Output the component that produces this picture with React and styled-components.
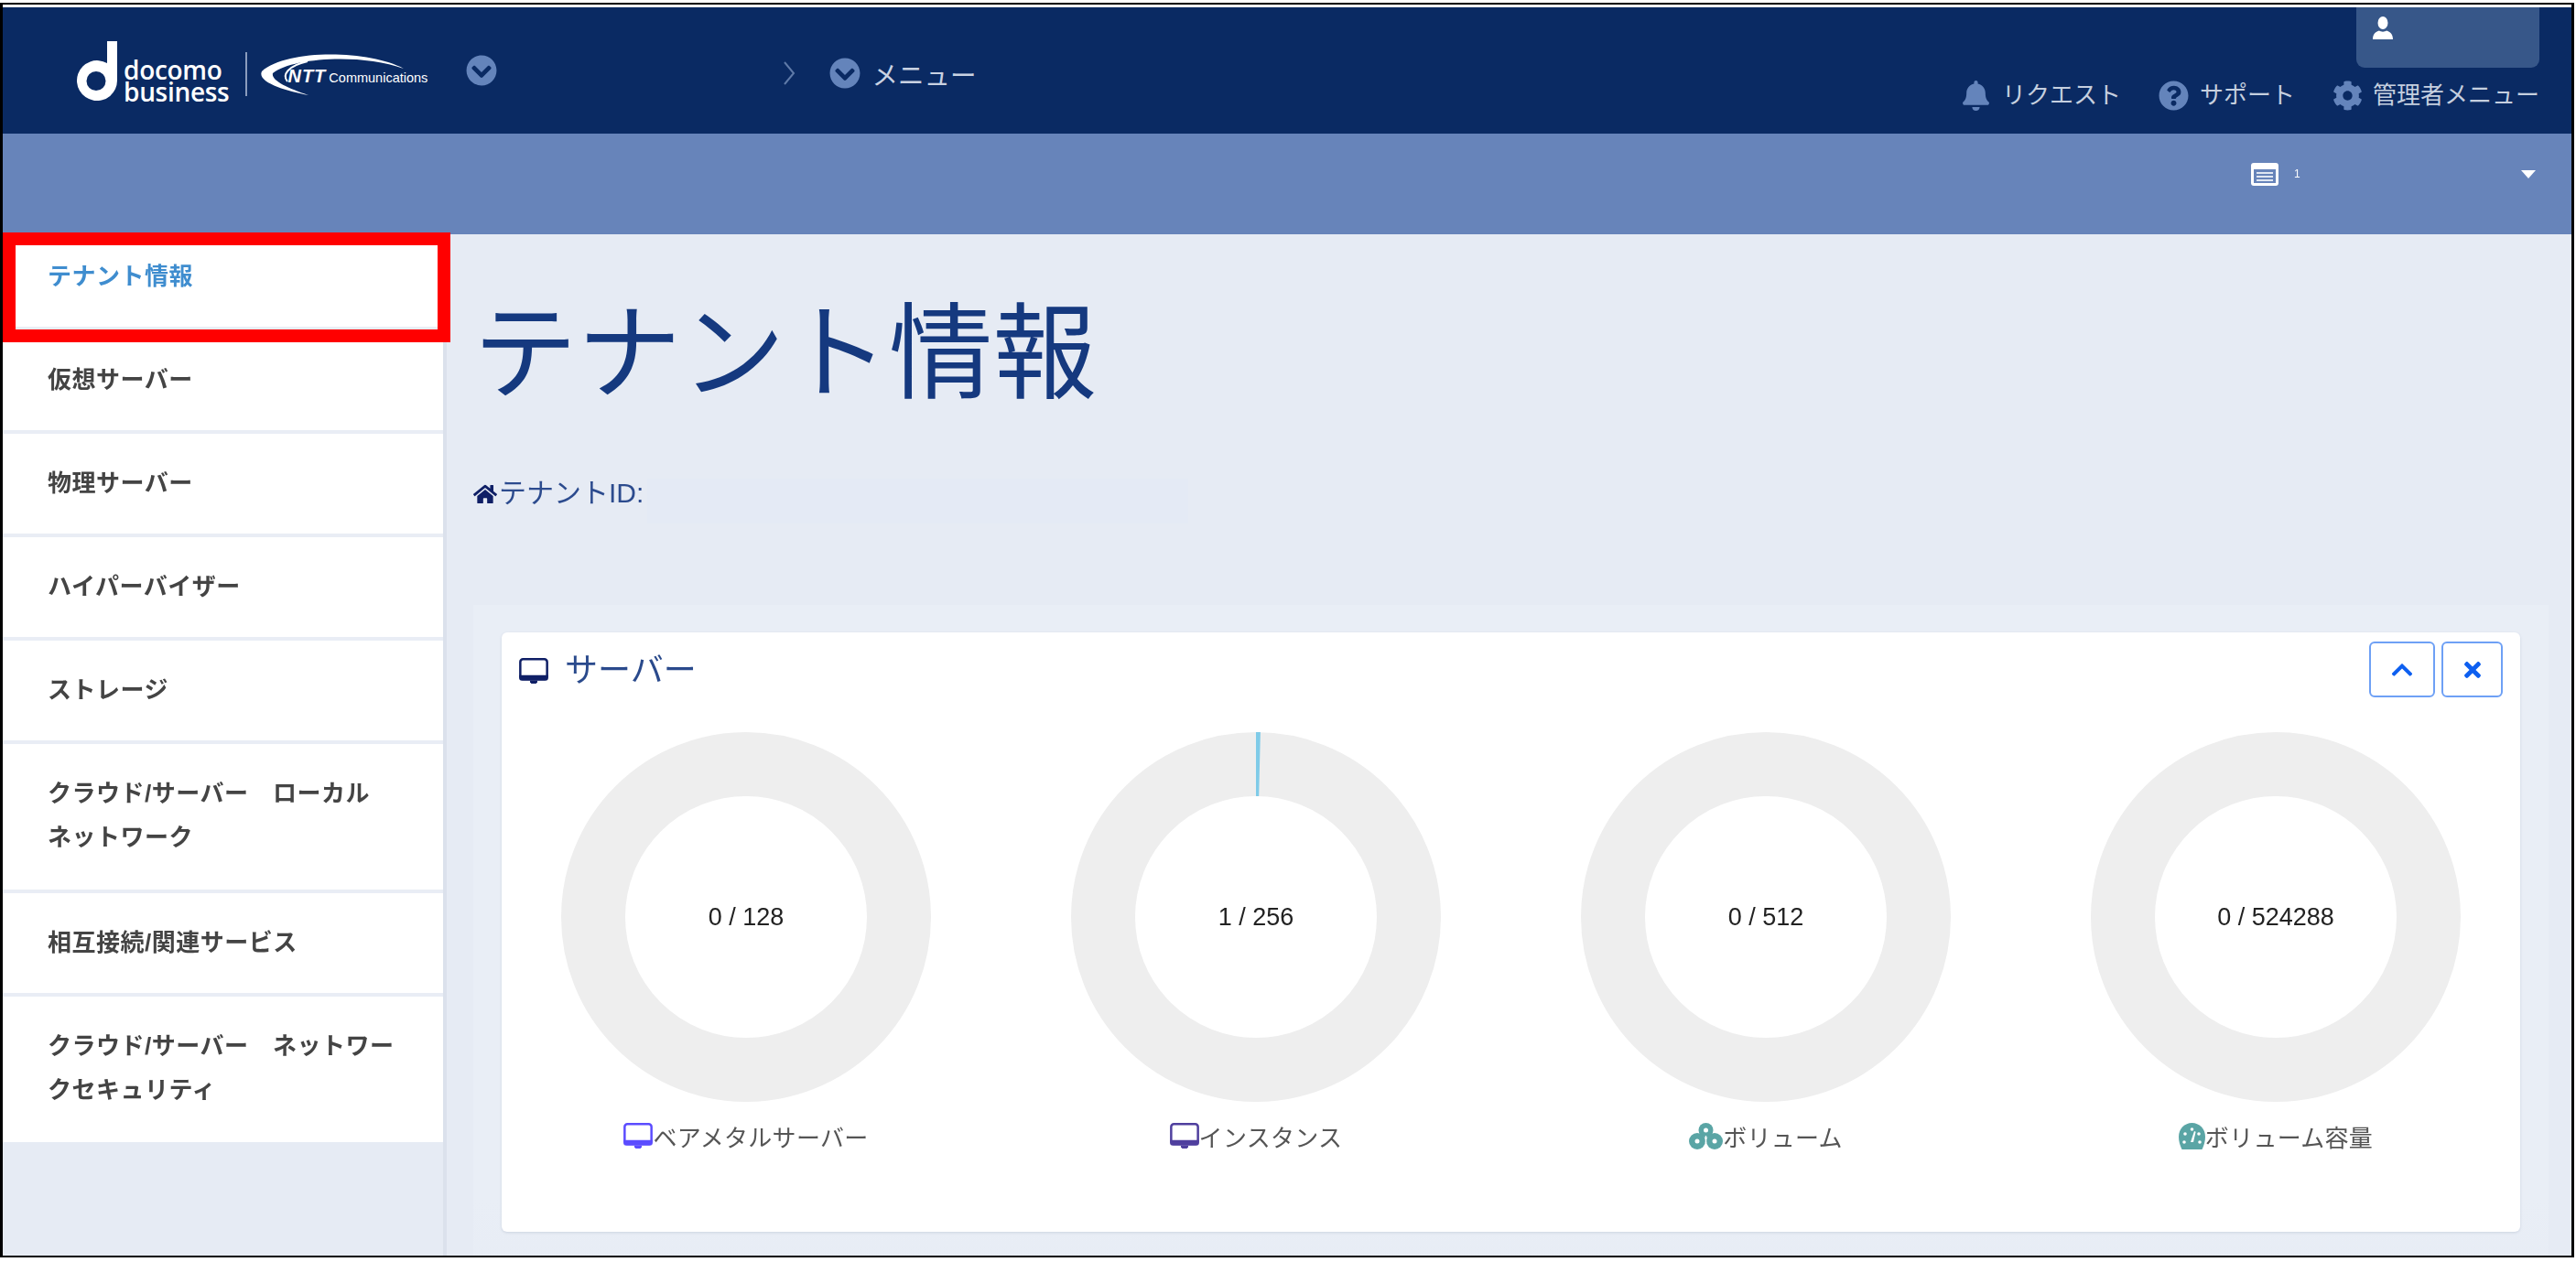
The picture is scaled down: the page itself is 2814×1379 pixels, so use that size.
import styled, { createGlobalStyle } from 'styled-components';
import {
  FaBell,
  FaChevronCircleDown,
  FaChevronUp,
  FaCog,
  FaHome,
  FaQuestionCircle,
  FaTimes,
} from 'react-icons/fa';

const GlobalStyle = createGlobalStyle`
  html, body {
    margin: 0;
    padding: 0;
    background: #fff;
  }
  * {
    box-sizing: border-box;
  }
`;

const Page = styled.div`
  width: 2814px;
  height: 1379px;
  overflow: hidden;
  background: #fff;
  padding: 3px 2px 5px 0;
  font-family: 'Liberation Sans', 'Noto Sans CJK JP', sans-serif;
`;

const Frame = styled.div`
  height: 100%;
  border: solid #000;
  border-width: 2px 3px 2px 3px;
  padding-top: 3px;
  overflow: hidden;
`;

/* the reference is an upscaled capture, everything in it is a little soft */
const Capture = styled.div`
  height: 100%;
  display: flex;
  flex-direction: column;
  filter: blur(0.6px);
`;

const Header = styled.header`
  flex: none;
  height: 138px;
  background: #0a2a63;
  display: flex;
  justify-content: space-between;
  padding: 0 35px 0 79px;
`;

const HeaderLeft = styled.div`
  display: flex;
  align-items: center;
`;

const Logo = styled.div`
  display: flex;
  align-items: center;
  color: #fff;
`;

const LogoWords = styled.div`
  display: flex;
  flex-direction: column;
  margin-left: 7px;
  font-family: 'Open Sans', sans-serif;
  font-size: 28px;
  font-weight: 600;
  line-height: 24px;
  letter-spacing: -0.3px;
  margin-top: 22px;
`;

const LogoRule = styled.span`
  width: 2px;
  height: 48px;
  margin: 8px 14px 0 18px;
  background: #8a9cbd;
`;

const NttMark = styled.div`
  display: grid;
  width: 188px;
  height: 46px;
  margin-top: 8px;
  svg,
  span {
    grid-area: 1 / 1;
  }
`;

const NttText = styled.span`
  padding: 15px 0 0 30px;
  font-family: 'Liberation Sans', sans-serif;
  font-size: 14.5px;
  line-height: 20px;
  white-space: nowrap;
  b {
    font-size: 20px;
    font-style: italic;
    letter-spacing: 1px;
    margin-right: 3px;
  }
`;

const RoundChevron = styled(FaChevronCircleDown)`
  flex: none;
  font-size: 34px;
  color: #6484bb;
`;

const ProductToggle = styled.span`
  display: flex;
  margin-left: 37px;
`;

const Crumbs = styled.nav`
  display: flex;
  align-items: center;
  margin: 6px 0 0 312px;
  color: #c9d2e2;
  font-size: 28.500px;
`;

const CrumbArrow = styled.svg`
  width: 14px;
  height: 30px;
  margin-right: 37px;
`;

const CrumbLabel = styled.span`
  margin-left: 12px;
`;

const HeaderRight = styled.div`
  display: flex;
  flex-direction: column;
  align-items: flex-end;
`;

const UserTab = styled.div`
  width: 200px;
  height: 66px;
  padding: 10px 0 0 18px;
  background: #375789;
  border-radius: 0 0 9px 9px;
  color: #fff;
`;

const HeaderNav = styled.nav`
  display: flex;
  align-items: center;
  gap: 41px;
  margin-top: 13px;
`;

const NavItem = styled.a`
  display: flex;
  align-items: center;
  gap: ${(p) => p.$gap || 12}px;
  color: #c5cfdf;
  font-size: 26px;
  line-height: 34px;
  white-space: nowrap;
  svg {
    color: #6484bb;
    font-size: 33px;
  }
`;

const SubBar = styled.div`
  flex: none;
  height: 110px;
  background: #6784ba;
  display: flex;
  justify-content: flex-end;
  padding: 31px 39px 0 0;
`;

const TenantSelect = styled.div`
  width: 311px;
  height: 26px;
  display: flex;
  align-items: center;
  color: #fff;
  font-size: 12px;
`;

const SelectNumber = styled.span`
  margin-left: 17px;
  flex: 1;
`;

const Caret = styled.span`
  width: 0;
  height: 0;
  border-left: 8px solid transparent;
  border-right: 8px solid transparent;
  border-top: 9px solid #fff;
`;

const Body = styled.div`
  flex: 1;
  min-height: 0;
  display: flex;
  background: #e6ebf4;
`;

const Sidebar = styled.aside`
  flex: none;
  align-self: stretch;
  width: 485px;
  border-right: 4px solid #dbe1ec;
`;

const SideList = styled.ul`
  margin: 0;
  padding: 0;
  list-style: none;
  background: #fff;
`;

const SideItem = styled.li`
  position: relative;
  padding: ${(p) => (p.$active ? '22px 30px 31px 49px' : '30px 30px 31px 49px')};
  border-bottom: 4px solid #e9edf5;
  color: ${(p) => (p.$active ? '#3f8dcf' : '#444')};
  font-size: 26px;
  font-weight: 700;
  letter-spacing: 0.5px;
  line-height: 48px;
  white-space: pre-line;
  &:nth-child(6) {
    padding-bottom: 33px;
  }
  &:last-child {
    padding-bottom: 33px;
    border-bottom: 0;
  }
`;

const Highlight = styled.span`
  position: absolute;
  top: -2px;
  left: 0;
  width: 489px;
  height: 120px;
  border: 14px solid #f00;
`;

const Main = styled.main`
  flex: 1;
  min-width: 0;
  padding: 0 25px 0 29px;
`;

const Title = styled.h1`
  margin: 59px 0 0;
  color: #15397f;
  font-size: 113.500px;
  font-weight: 400;
  line-height: 144px;
`;

const TenantLine = styled.div`
  display: flex;
  align-items: flex-start;
  height: 49px;
  margin-top: 64px;
  color: #2c4b8e;
  font-size: 30px;
  line-height: 32px;
  svg {
    color: #0f1f66;
    font-size: 26px;
    margin: 4px 2px 0 0;
  }
`;

const TenantMask = styled.span`
  width: 591px;
  height: 49px;
  margin-left: 4px;
  background: #e4eaf5;
`;

const Panel = styled.section`
  height: 800px;
  margin-top: 89px;
  padding: 30px 31px;
  background: linear-gradient(#e9eef6, #e9eef6 650px, #e6ebf4);
`;

const Card = styled.div`
  height: 655px;
  background: #fff;
  border-radius: 6px;
  box-shadow: 0 1px 3px rgba(120, 135, 165, 0.25);
`;

const CardHead = styled.div`
  height: 109px;
  display: flex;
  justify-content: space-between;
  align-items: flex-start;
  padding: 10px 19px;
`;

const CardTitle = styled.h2`
  display: flex;
  align-items: center;
  gap: 18px;
  margin: 12px 0 0;
  color: #2a4a8c;
  font-size: 36px;
  font-weight: 400;
  line-height: 40px;
  svg {
    color: #0f1f66;
  }
`;

const CardTools = styled.div`
  display: flex;
  gap: 7px;
`;

const ToolButton = styled.button`
  width: ${(p) => p.$width}px;
  height: 61px;
  display: flex;
  align-items: center;
  justify-content: center;
  padding: 0;
  background: #fff;
  border: 2px solid #6ea0f5;
  border-radius: 6px;
  color: #0d5ff0;
  font-size: 26px;
`;

const Charts = styled.div`
  display: grid;
  grid-template-columns: repeat(4, 557px);
  justify-content: center;
`;

const Chart = styled.figure`
  margin: 0;
  display: flex;
  flex-direction: column;
  align-items: center;
`;

const DonutWrap = styled.div`
  display: grid;
  place-items: center;
  width: 404px;
  height: 404px;
  > * {
    grid-area: 1 / 1;
  }
`;

const DonutValue = styled.span`
  color: #222;
  font-size: 27px;
`;

const ChartLabel = styled.figcaption`
  display: flex;
  align-items: center;
  height: 32px;
  margin-top: 21px;
  color: #555;
  font-size: 26px;
  letter-spacing: 0.3px;
  white-space: nowrap;
  svg {
    color: ${(p) => p.$color};
  }
`;

function MonitorIcon({ size = 32 }) {
  return (
    <svg width={size} height={size * 0.9} viewBox="0 0 32 29">
      <rect x="1.250" y="1.250" width="29.500" height="22" rx="3" fill="none" stroke="currentColor" strokeWidth="2.500" />
      <path d="M0 19h32v3a3 3 0 0 1-3 3H3a3 3 0 0 1-3-3z" fill="currentColor" />
      <path d="M12 25h8v1.500l-2 2.500h-4l-2-2.500z" fill="currentColor" />
    </svg>
  );
}

function VolumeIcon() {
  return (
    <svg width="37" height="29" viewBox="0 0 37 29">
      <g fill="currentColor">
        <circle cx="18.500" cy="8" r="8" />
        <circle cx="9" cy="20" r="9" />
        <circle cx="28" cy="20" r="9" />
      </g>
      <g fill="#fff">
        <circle cx="18.500" cy="8" r="2.500" />
        <circle cx="9" cy="20" r="2.500" />
        <circle cx="28" cy="20" r="2.500" />
        <path d="M17.800 14h1.400v8h-1.400z" />
      </g>
    </svg>
  );
}

function CapacityIcon() {
  return (
    <svg width="29" height="29" viewBox="0 0 29 29">
      <path d="M14.500 0C6.500 0 0 6.500 0 15c0 5 1.500 10 3.500 14h22c2-4 3.500-9 3.500-14C29 6.500 22.500 0 14.500 0z" fill="currentColor" />
      <g fill="#fff">
        <circle cx="7" cy="12" r="1.800" />
        <circle cx="14.500" cy="7" r="1.800" />
        <circle cx="22" cy="12" r="1.800" />
        <circle cx="6" cy="21" r="1.800" />
        <circle cx="23" cy="21" r="1.800" />
        <path d="M17 9l1.600.7-2.600 11.300h-3z" />
      </g>
    </svg>
  );
}

function Donut({ used, total, color }) {
  const radius = 167;
  const length = 2 * Math.PI * radius;
  return (
    <DonutWrap>
      <svg width="404" height="404" viewBox="0 0 404 404">
        <circle cx="202" cy="202" r={radius} fill="none" stroke="#eee" strokeWidth="70" />
        {used > 0 && (
          <circle
            cx="202"
            cy="202"
            r={radius}
            fill="none"
            stroke={color}
            strokeWidth="70"
            strokeDasharray={`${(used / total) * length} ${length}`}
            transform="rotate(-90 202 202)"
          />
        )}
      </svg>
      <DonutValue>
        {used} / {total}
      </DonutValue>
    </DonutWrap>
  );
}

const sideItems = [
  'テナント情報',
  '仮想サーバー',
  '物理サーバー',
  'ハイパーバイザー',
  'ストレージ',
  'クラウド/サーバー　ローカル\nネットワーク',
  '相互接続/関連サービス',
  'クラウド/サーバー　ネットワー\nクセキュリティ',
];

const charts = [
  { label: 'ベアメタルサーバー', used: 0, total: 128, color: '#5b4cff', icon: <MonitorIcon /> },
  { label: 'インスタンス', used: 1, total: 256, color: '#4f3f9e', icon: <MonitorIcon /> },
  { label: 'ボリューム', used: 0, total: 512, color: '#5aa5a5', icon: <VolumeIcon /> },
  { label: 'ボリューム容量', used: 0, total: 524288, color: '#5aa5a5', icon: <CapacityIcon /> },
];

export default function App() {
  return (
    <Page>
      <GlobalStyle />
      <Frame>
        <Capture>
          <Header>
            <HeaderLeft>
              <Logo>
                <svg width="46" height="65" viewBox="0 0 46 65">
                  <path
                    fillRule="evenodd"
                    d="M35 0h11v43a22 22 0 1 1-11-19zM23 33a10.500 10.500 0 1 0 0 21 10.500 10.500 0 0 0 0-21z"
                    fill="#fff"
                  />
                </svg>
                <LogoWords>
                  <span>docomo</span>
                  <span>business</span>
                </LogoWords>
                <LogoRule />
                <NttMark>
                  <svg width="157" height="46" viewBox="0 0 157 46">
                    <path
                      d="M157 17C120-3 30-5 2 20c-6 12 28 22 51 26C30 38 12 30 14 22 35 5 110 0 157 17z"
                      fill="#fff"
                    />
                    <path d="M30 31c-6-7 0-17 22-22" fill="none" stroke="#fff" strokeWidth="2" />
                  </svg>
                  <NttText>
                    <b>NTT</b>Communications
                  </NttText>
                </NttMark>
              </Logo>
              <ProductToggle>
                <RoundChevron />
              </ProductToggle>
              <Crumbs>
                <CrumbArrow viewBox="0 0 14 30">
                  <path d="M2 3l10 12L2 27" fill="none" stroke="#5f7aa8" strokeWidth="2" />
                </CrumbArrow>
                <RoundChevron />
                <CrumbLabel>メニュー</CrumbLabel>
              </Crumbs>
            </HeaderLeft>
            <HeaderRight>
              <UserTab>
                <svg width="22" height="25" viewBox="0 0 22 25">
                  <ellipse cx="11" cy="7" rx="5.500" ry="7" fill="#fff" />
                  <path d="M0 25c0-6 3-8 7-9.500 2 1.500 6 1.500 8 0 4 1.500 7 3.500 7 9.500z" fill="#fff" />
                </svg>
              </UserTab>
              <HeaderNav>
                <NavItem $gap={12}>
                  <FaBell />
                  リクエスト
                </NavItem>
                <NavItem>
                  <FaQuestionCircle />
                  サポート
                </NavItem>
                <NavItem $gap={11}>
                  <FaCog />
                  管理者メニュー
                </NavItem>
              </HeaderNav>
            </HeaderRight>
          </Header>
          <SubBar>
            <TenantSelect>
              <svg width="30" height="25" viewBox="0 0 30 25">
                <rect x="0" y="0" width="30" height="25" rx="3" fill="#fff" />
                <rect x="3" y="7" width="24" height="15" fill="#6784ba" />
                <path d="M6 10h18v2H6zM6 14h18v2H6zM6 18h18v2H6z" fill="#dfe6f2" />
              </svg>
              <SelectNumber>1</SelectNumber>
              <Caret />
            </TenantSelect>
          </SubBar>
          <Body>
            <Sidebar>
              <SideList>
                {sideItems.map((item, i) => (
                  <SideItem key={item} $active={i === 0}>
                    {item}
                    {i === 0 && <Highlight />}
                  </SideItem>
                ))}
              </SideList>
            </Sidebar>
            <Main>
              <Title>テナント情報</Title>
              <TenantLine>
                <FaHome />
                テナントID:
                <TenantMask />
              </TenantLine>
              <Panel>
                <Card>
                  <CardHead>
                    <CardTitle>
                      <MonitorIcon />
                      サーバー
                    </CardTitle>
                    <CardTools>
                      <ToolButton $width={72}>
                        <FaChevronUp />
                      </ToolButton>
                      <ToolButton $width={67}>
                        <FaTimes />
                      </ToolButton>
                    </CardTools>
                  </CardHead>
                  <Charts>
                    {charts.map((c) => (
                      <Chart key={c.label}>
                        <Donut used={c.used} total={c.total} color="#7fcbe8" />
                        <ChartLabel $color={c.color}>
                          {c.icon}
                          {c.label}
                        </ChartLabel>
                      </Chart>
                    ))}
                  </Charts>
                </Card>
              </Panel>
            </Main>
          </Body>
        </Capture>
      </Frame>
    </Page>
  );
}
